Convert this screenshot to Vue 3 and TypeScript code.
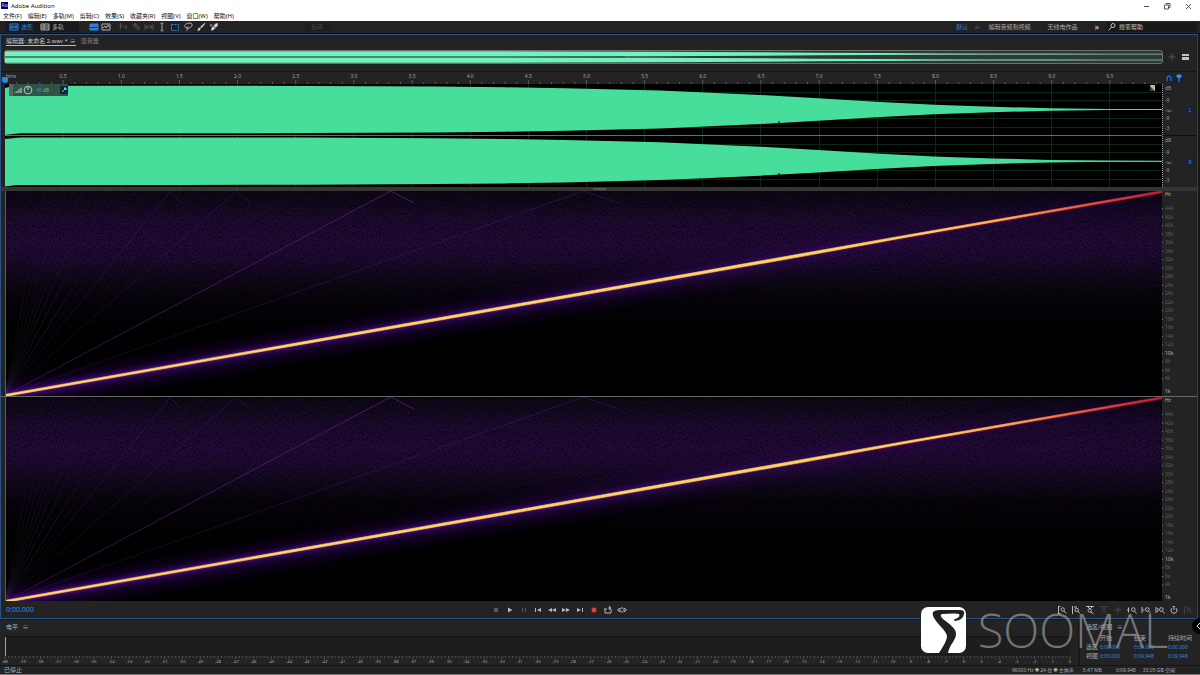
<script setup lang="ts">
interface Icon { name: string; tone?: string }
interface Segment { label: string; values: string[] }

const menus = ['文件(F)', '编辑(E)', '多轨(M)', '剪辑(C)', '效果(S)', '收藏夹(R)', '视图(V)', '窗口(W)', '帮助(H)']

const shapes: Record<string, string> = {
  wave: 'M1 2h8v6h-8zM1 5h8M3 3v4M5 4v2M7 3v4',
  multi: 'M1 2h8v6h-8zM1 4h8M1 6h8M4 2v6',
  spectral: 'M1 2h8v6h-8zM2 6l2-2 1 2 2-3 1 2',
  move: 'M2.5 1v6M1 4h4M6 5h3M7.5 3.5l1.5 1.5-1.5 1.5',
  razor: 'M2 3l2-2 5 5-2 2zM4 3l3 3M3 4l2-2',
  slip: 'M1 2v6M9 2v6M2 5h6M4 3l-2 2 2 2M6 3l2 2-2 2',
  ibeam: 'M3.5 1q1.5 0 1.5 1v6q0 1-1.5 1M6.5 1q-1.5 0-1.5 1M5 8q0 1 1.5 1',
  lasso: 'M3 6c-4-3 1-5 4-5s3 4-1 5c-3 1-4-1-2-1s1 3-1 4',
  spark: 'M5 1v8M1 5h8M3.5 3.5l3 3M6.5 3.5l-3 3',
  loop: 'M2 4v4h6v-4M1 4h3M5 3h3M6 1l2 2-2 2',
  skip: 'M.5 5l2.5-2v4zM4 3h2M4 7h2M9.5 5l-2.5-2v4z',
  zoomInAmp: 'M1.5 1v8M1.5 1.5h2M1.5 8.5h2M4 4.5a1.7 1.7 0 1 0 3.4 0a1.7 1.7 0 1 0-3.4 0M7 6l2.2 2.5',
  zoomOutAmp: 'M1.5 1v8M3 2h3M4 5a1.7 1.7 0 1 0 3.4 0a1.7 1.7 0 1 0-3.4 0M7 6.5l2.2 2',
  zoomTop: 'M1 1.5h8M3 2l2 2 2-2M3 5.5a1.7 1.7 0 1 0 3.4 0a1.7 1.7 0 1 0-3.4 0M6 7l2.5 2',
  zoomIn: 'M1.5 2.5v5M0 5h2.5M4.5 4.5a1.8 1.8 0 1 0 3.6 0a1.8 1.8 0 1 0-3.6 0M7.6 6.2l2 2.3',
  zoomLeft: 'M1 2v6M1.5 5h2M4.5 4.5a1.8 1.8 0 1 0 3.6 0a1.8 1.8 0 1 0-3.6 0M7.6 6.2l2 2.3',
  zoomSel: 'M1 2v6M2 3l1.5 2-1.5 2M4.5 4.5a1.8 1.8 0 1 0 3.6 0a1.8 1.8 0 1 0-3.6 0M7.6 6.2l2 2.3',
  timer: 'M3 3a3 3 0 1 0 4 0M5 1v4M3.5 1.5h2',
  search: 'M4 3.5a2 2 0 1 0 4 0a2 2 0 1 0-4 0M4.5 5l-3 3.5',
}

const tools: Icon[] = [
  { name: 'move', tone: 'dim' }, { name: 'razor', tone: 'dim' }, { name: 'slip', tone: 'dim' }, { name: 'ibeam' },
]

const zooms: Icon[] = [
  { name: 'zoomInAmp' }, { name: 'zoomOutAmp' }, { name: 'zoomTop' }, { name: 'zoomTop', tone: 'dim' },
  { name: 'spark', tone: 'dim' }, { name: 'zoomIn' }, { name: 'zoomLeft' }, { name: 'zoomSel' },
  { name: 'timer' }, { name: 'zoomOutAmp', tone: 'dim' },
]

const duration = 9.948
const pct = (n: number): string => `${n.toFixed(3)}%`
const ticks = Array.from({ length: 99 }, (_, i) => ({ x: pct(((i + 1) / 10 / duration) * 100), major: (i + 1) % 5 === 0 }))
const times = Array.from({ length: 19 }, (_, i) => ({ x: pct(((i + 1) / 2 / duration) * 100), text: ((i + 1) / 2).toFixed(1) }))

// Half amplitude of the swept tone along the clip, as [x, half height] pairs.
const envelope: [number, number][] = [
  [0, 23.7], [175, 23.7], [300, 23.6], [430, 22.9], [500, 22.2], [560, 21.2], [655, 18.9], [700, 17], [755, 14.5],
  [813, 11.2], [871, 7.8], [929, 4.8], [987, 2.7], [1046, 1.3], [1105, 0.6], [1157, 0.4],
]
function wavePath(mid: number, scale: number): string {
  const top = envelope.map(([x, h]) => `${x},${(mid - h * scale).toFixed(2)}`)
  const bottom = [...envelope].reverse().map(([x, h]) => `${x},${(mid + h * scale).toFixed(2)}`)
  return `M${top.join('L')}L${bottom.join('L')}Z`
}

const harmonics = [
  { n: 2, o: 0.4 }, { n: 3, o: 0.85 }, { n: 4, o: 0.12 }, { n: 5, o: 0.35 }, { n: 6, o: 0.12 }, { n: 7, o: 0.35 },
  { n: 8, o: 0.14 }, { n: 9, o: 0.32 }, { n: 11, o: 0.3 }, { n: 13, o: 0.28 }, { n: 15, o: 0.26 }, { n: 17, o: 0.24 },
  { n: 20, o: 0.2 }, { n: 24, o: 0.18 }, { n: 30, o: 0.18 },
]

const freqs = Array.from({ length: 21 }, (_, i) => 44 - i * 2).map((k) => ({
  text: `${k}k`, y: pct((1 - k / 48) * 100), strong: k === 10,
}))

const dbMarks = [
  { y: 4, text: 'dB' }, { y: 16, text: '-9' }, { y: 26, text: '-∞' }, { y: 34, text: '-9' }, { y: 44, text: '-3' },
]

const levelLabels = Array.from({ length: 61 }, (_, i) => ({ x: pct((i / 60) * 100), text: i === 0 ? 'dB' : String(i - 60) }))
const levelTicks = Array.from({ length: 301 }, (_, i) => ({ x: pct(i / 3), long: i % 5 === 0 }))

const segments: Segment[] = [
  { label: '选区', values: ['0:00.000', '0:00.000', '0:00.000'] },
  { label: '视图', values: ['0:00.000', '0:09.948', '0:09.948'] },
]
</script>

<template>
  <div class="app">
    <header class="title">
      <span class="badge">Au</span>
      <h1>Adobe Audition</h1>
      <div class="window-buttons">
        <button aria-label="最小化"><svg viewBox="0 0 8 8"><path d="M2 4.5h5" /></svg></button>
        <button aria-label="还原"><svg viewBox="0 0 8 8"><path d="M1.5 3h4v4h-4zM3 2.5v-1h4v4h-1" /></svg></button>
        <button aria-label="关闭"><svg viewBox="0 0 8 8"><path d="M2 2l5 5M7 2l-5 5" /></svg></button>
      </div>
    </header>
    <nav class="menus"><button v-for="m in menus" :key="m">{{ m }}</button></nav>

    <div class="toolbar">
      <div class="modes">
        <button class="blue on"><svg class="ic" viewBox="0 0 10 10"><path :d="shapes.wave" /></svg>波形</button>
        <button><svg class="ic" viewBox="0 0 10 10"><path :d="shapes.multi" /></svg>多轨</button>
      </div>
      <div class="views">
        <button class="blue on" aria-label="波形显示"><svg class="ic" viewBox="0 0 10 10"><path d="M1 2h8v6h-8z" fill="#2f7fd0" /><path d="M1 5.5h8" stroke="#123a66" /></svg></button>
        <button aria-label="频谱显示"><svg class="ic" viewBox="0 0 10 10"><path :d="shapes.spectral" /></svg></button>
      </div>
      <div class="tools">
        <button v-for="t in tools" :key="t.name" :class="t.tone" :aria-label="t.name"><svg class="ic" viewBox="0 0 10 10"><path :d="shapes[t.name]" /></svg></button>
        <button class="blue on" aria-label="框选"><svg class="ic" viewBox="0 0 10 10"><path d="M1.5 2.5h7v6h-7z" stroke-dasharray="2 1" /></svg></button>
        <button aria-label="套索"><svg class="ic" viewBox="0 0 10 10"><path :d="shapes.lasso" /></svg></button>
        <button aria-label="画笔"><svg class="ic solid" viewBox="0 0 10 10"><path d="M8.5 1l.8.8-4 4.4-1.2-1.2z" /><path d="M3.6 5.4l1.3 1.3q-1 2.3-4 2.3q1.3-.7 1-2q.6-1.5 1.7-1.6z" /></svg></button>
        <button aria-label="污点修复"><svg class="ic solid" viewBox="0 0 10 10"><path d="M2.5 6l4-4.5 2.5-.3-.3 2.5-4.2 4.3-2.5.8z" /><path d="M4.5 4l1.8 1.8" stroke="#444" /><path d="M2 2v2.5M.8 3.2h2.5" stroke="#999" /></svg></button>
      </div>
      <button class="invert" disabled>反转</button>
      <div class="workspaces">
        <button class="blue">默认</button><button class="blue lines" aria-label="工作区菜单">≡</button>
        <button>编辑音频到视频</button>
        <button>无线电作品</button>
        <button class="more" aria-label="更多工作区">»</button>
      </div>
      <label class="search">
        <svg class="ic" viewBox="0 0 10 10"><path :d="shapes.search" /></svg>
        <input type="text" aria-label="搜索帮助" placeholder="搜索帮助" />
      </label>
    </div>

    <main class="editor">
      <div class="tabs">
        <button class="active">编辑器: 未命名 2.wav *<span>≡</span></button>
        <button>混音器</button>
      </div>

      <div class="overview">
        <div class="range">
          <svg viewBox="0 0 1157 12" preserveAspectRatio="none">
            <path d="M0 3.2H1157M0 9H1157" stroke="#86a297" stroke-width="1" />
            <path :d="wavePath(3, 0.12)" fill="#74f1bd" />
            <path :d="wavePath(9, 0.12)" fill="#74f1bd" />
            <path d="M0 6H620" stroke="#1d5a45" stroke-width="1" />
          </svg>
        </div>
        <div class="side">
          <svg class="ic faint" viewBox="0 0 10 10"><path :d="shapes.spark" /></svg>
          <svg class="ic listing" viewBox="0 0 10 10"><path d="M1 2h7v2h-7zM1 5h7v3h-7z" /></svg>
        </div>
      </div>

      <div class="ruler row">
        <div class="plot">
          <svg class="fill">
            <line v-for="t in ticks" :key="t.x" :x1="t.x" :x2="t.x" :y1="t.major ? 8 : 10" y2="12" class="tick" />
            <text x="1" y="6">hms</text>
            <text v-for="t in times" :key="t.x" :x="t.x" y="6" text-anchor="middle">{{ t.text }}</text>
          </svg>
          <span class="playhead"></span>
        </div>
        <div class="snap">
          <button aria-label="对齐"><svg viewBox="0 0 8 8"><path d="M2 7v-3a2 2 0 0 1 4 0v3" /></svg></button>
          <button aria-label="标记"><svg viewBox="0 0 8 8"><path d="M4 4v4M2 1h4v2l-2 1-2-1z" fill="#3b8de0" /></svg></button>
        </div>
      </div>

      <div class="waves row">
        <div class="plot">
          <svg class="fill grid">
            <line v-for="t in times" :key="t.x" :x1="t.x" :x2="t.x" y1="0" y2="103" />
            <line v-for="y in [8, 16, 34, 43, 60, 68, 86, 95]" :key="y" x1="0" x2="100%" :y1="y" :y2="y" />
          </svg>
          <svg class="fill" viewBox="0 0 1157 103" preserveAspectRatio="none">
            <path d="M0 25.5H1157M0 77.5H1157" stroke="#6c9c84" stroke-width="1" />
            <path :d="wavePath(25.5, 1)" fill="#47dd9a" />
            <path :d="wavePath(77.2, 1)" fill="#47dd9a" />
            <path d="M0 0h16L0 4zM0 53V55L16 53.5z" fill="#000" />
            <path d="M0 49h16L0 51zM0 100.5h16L0 102.5z" fill="#47dd9a" />
            <path d="M774 37v4M774 89v4" stroke="#000" stroke-width="1" />
            <path d="M0 51.5H1157" stroke="#68705c" stroke-width="1" />
          </svg>
          <div class="gain">
            <i></i>
            <svg viewBox="0 0 8 8" class="ramp"><path d="M0 7L8 1V7z" /></svg>
            <svg viewBox="0 0 8 8" class="knob"><circle cx="4" cy="4" r="3" /><path d="M4 1v3" /></svg>
            <b>+0</b><span>dB</span>
            <button aria-label="固定"><svg viewBox="0 0 8 8"><path d="M2 6l3-3M4 2h2v2z" /></svg></button>
          </div>
          <span class="corner"></span>
        </div>
        <div class="scale">
          <div v-for="ch in ['L', 'R']" :key="ch" class="db">
            <svg class="fill">
              <line x1="0" x2="0" y1="0" y2="52" class="dots" />
              <text v-for="(d, i) in dbMarks" :key="i" x="3" :y="d.y + 2">{{ d.text }}</text>
            </svg>
            <button>{{ ch }}</button>
          </div>
        </div>
      </div>

      <div class="divider"><i></i></div>

      <div class="spectra">
        <div v-for="ch in ['L', 'R']" :key="ch" class="row spectrum">
          <div class="plot">
            <svg class="fill" viewBox="0 0 1157 205" preserveAspectRatio="none">
              <defs>
                <linearGradient :id="'haze' + ch" x1="0" y1="0" x2="0" y2="1">
                  <stop offset="0" stop-color="#0f0818" /><stop offset=".06" stop-color="#140a22" />
                  <stop offset=".13" stop-color="#200b35" /><stop offset=".25" stop-color="#270c40" />
                  <stop offset=".33" stop-color="#220b38" /><stop offset=".42" stop-color="#140920" />
                  <stop offset=".52" stop-color="#07040c" /><stop offset=".68" stop-color="#000" />
                </linearGradient>
                <linearGradient :id="'sweep' + ch" gradientUnits="userSpaceOnUse" x1="0" y1="0" x2="1157" y2="0">
                  <stop offset="0" stop-color="#ffda68" /><stop offset=".8" stop-color="#ffd35e" />
                  <stop offset=".88" stop-color="#ffa348" /><stop offset=".94" stop-color="#f2503a" />
                  <stop offset="1" stop-color="#cc1830" />
                </linearGradient>
                <linearGradient :id="'glow' + ch" gradientUnits="userSpaceOnUse" x1="0" y1="0" x2="1157" y2="0">
                  <stop offset="0" stop-color="#5c0fae" /><stop offset=".5" stop-color="#500d98" />
                  <stop offset=".8" stop-color="#3a0a66" stop-opacity=".5" /><stop offset="1" stop-color="#30085a" stop-opacity=".15" />
                </linearGradient>
                <linearGradient :id="'rise' + ch" gradientUnits="userSpaceOnUse" x1="0" y1="205" x2="0" y2="0">
                  <stop offset="0" stop-color="#54207a" stop-opacity=".5" /><stop offset=".3" stop-color="#4a1a6c" stop-opacity=".8" />
                  <stop offset="1" stop-color="#561a76" />
                </linearGradient>
                <linearGradient :id="'fan' + ch" gradientUnits="userSpaceOnUse" x1="0" y1="205" x2="0" y2="0">
                  <stop offset="0" stop-color="#54406a" stop-opacity=".6" /><stop offset=".4" stop-color="#4a3060" />
                  <stop offset=".65" stop-color="#4a1a6c" stop-opacity=".35" /><stop offset="1" stop-color="#571a78" stop-opacity=".35" />
                </linearGradient>
                <filter :id="'wide' + ch" filterUnits="userSpaceOnUse" x="0" y="-40" width="1157" height="290"><feGaussianBlur stdDeviation="8" /></filter>
                <filter :id="'tight' + ch" filterUnits="userSpaceOnUse" x="0" y="-40" width="1157" height="290"><feGaussianBlur stdDeviation="2" /></filter>
                <filter :id="'grain' + ch" x="0" y="0" width="1" height="1">
                  <feTurbulence type="fractalNoise" baseFrequency=".8 .5" numOctaves="2" seed="7" />
                  <feColorMatrix values="0 0 0 0 0  0 0 0 0 0  0 0 0 0 0  1.5 0 0 0 -.5" />
                </filter>
              </defs>
              <rect width="1157" height="205" :fill="`url(#haze${ch})`" />
              <rect width="1157" height="205" :filter="`url(#grain${ch})`" />
              <path d="M0 206L1157 2" :stroke="`url(#glow${ch})`" stroke-width="16" opacity=".42" :filter="`url(#wide${ch})`" />
              <g fill="none">
                <path v-for="h in harmonics" :key="h.n" :opacity="h.o" :stroke="`url(#${h.n > 7 ? 'fan' : 'rise'}${ch})`" :d="`M0 205L${1157 / h.n} 0l${70 / h.n} 12`" />
              </g>
              <path d="M0 205L1157 1" :stroke="`url(#glow${ch})`" stroke-width="6" opacity=".75" :filter="`url(#tight${ch})`" />
              <path d="M0 205L1157 1" stroke="#8a1c3a" stroke-width="3.6" opacity=".45" />
              <path d="M0 204L900 44.5L1157 0V1.5L900 46.5L800 65L0 206z" :fill="`url(#sweep${ch})`" :stroke="`url(#sweep${ch})`" stroke-width=".6" />
            </svg>
          </div>
          <div class="scale">
            <svg class="fill hz">
              <g v-for="f in freqs" :key="f.text" :class="{ strong: f.strong }">
                <svg x="0" :y="f.y" overflow="visible"><path d="M0 .5h1" /><text x="3" y="2">{{ f.text }}</text></svg>
              </g>
              <text x="3" y="5" class="lit">Hz</text>
              <svg x="0" y="98%" overflow="visible"><text x="3" y="2" class="lit">1k</text></svg>
            </svg>
          </div>
        </div>
      </div>

      <div class="transport">
        <span class="clock">0:00.000</span>
        <i class="gap-left"></i>
        <div class="icons">
          <button class="dim" aria-label="停止"><svg viewBox="0 0 10 10"><path d="M3 3h4v4h-4z" /></svg></button>
          <button aria-label="播放"><svg viewBox="0 0 10 10"><path d="M3 2.5l4.5 2.5-4.5 2.5z" /></svg></button>
          <button class="dim" aria-label="暂停"><svg viewBox="0 0 10 10"><path d="M3 3h1v4h-1zM6 3h1v4h-1z" /></svg></button>
          <button aria-label="上一个"><svg viewBox="0 0 10 10"><path d="M2 3h1v4h-1zM8 3v4l-4-2z" /></svg></button>
          <button aria-label="快退"><svg viewBox="0 0 10 10"><path d="M5 3v4l-4-2zM9 3v4l-4-2z" /></svg></button>
          <button aria-label="快进"><svg viewBox="0 0 10 10"><path d="M1 3v4l4-2zM5 3v4l4-2z" /></svg></button>
          <button aria-label="下一个"><svg viewBox="0 0 10 10"><path d="M2 3v4l4-2zM7 3h1v4h-1z" /></svg></button>
          <button class="rec" aria-label="录制"><svg viewBox="0 0 10 10"><circle cx="5" cy="5" r="2.5" /></svg></button>
          <button class="stroke" aria-label="循环"><svg viewBox="0 0 10 10"><path :d="shapes.loop" /></svg></button>
          <button class="stroke" aria-label="跳过所选"><svg viewBox="0 0 10 10"><path :d="shapes.skip" /></svg></button>
        </div>
        <i class="gap-right"></i>
        <div class="icons">
          <button v-for="(z, i) in zooms" :key="i" class="stroke" :class="z.tone" :aria-label="z.name"><svg viewBox="0 0 10 10"><path :d="shapes[z.name]" /></svg></button>
        </div>
      </div>
    </main>

    <div class="bottom">
      <section class="levels">
        <h2>电平 <span>≡</span></h2>
        <div class="meter"><i></i></div>
        <svg class="level-scale">
          <line v-for="t in levelTicks" :key="t.x" :x1="t.x" :x2="t.x" y1="0" :y2="t.long ? 3 : 2" />
          <text v-for="l in levelLabels" :key="l.text" :x="l.x" y="7" text-anchor="middle">{{ l.text }}</text>
        </svg>
      </section>
      <section class="selection">
        <h2>选区/视图 <span>≡</span></h2>
        <table>
          <thead><tr><th></th><th>开始</th><th>结束</th><th>持续时间</th></tr></thead>
          <tbody><tr v-for="s in segments" :key="s.label"><th>{{ s.label }}</th><td v-for="(v, i) in s.values" :key="i">{{ v }}</td></tr></tbody>
        </table>
      </section>
    </div>

    <footer class="status">
      <span class="state">已停止</span>
      <span class="format">96000 Hz <em>●</em> 24 位 <em>●</em> 立体声</span><span class="size">5.47 MB</span><span>0:09.948</span><span>33.05 GB 空闲</span>
    </footer>

    <div class="watermark">
      <svg viewBox="0 0 45 46"><rect width="45" height="46" rx="7" fill="#fff" /><path d="M12 5Q14 3 19 3H39Q44 3 43 7Q42 13 34 14Q32 13 34 12Q40 10 38 7Q36 6 21 7Q18 8 22 12C28 17 35 21 35 27C35 33 29 37 27 46H18C21 41 26 34 26 29C25 23 17 18 13 11Q11 7 12 5Z" fill="#202220" /></svg>
      <span>SOOMAL</span>
    </div>
    <button class="drawer" aria-label="展开"><svg viewBox="0 0 8 8"><path d="M6 1L3 4L6 7" /></svg></button>
  </div>
</template>

<style>
body { margin: 0; background: #161616; }
</style>

<style scoped>
.app { position: relative; display: flex; flex-direction: column; height: 100vh; overflow: hidden; box-sizing: border-box; border-bottom: 1px solid #777; background: #181818; color: #acacac; font: 6px/8px "Noto Sans", "Noto Sans CJK SC", sans-serif; }
button { display: flex; align-items: center; padding: 0; border: 0; background: none; color: inherit; font: inherit; white-space: nowrap; }
h1, h2 { margin: 0; font: inherit; }
i, b, em { font-style: normal; font-weight: 400; }
svg { display: block; }
.ic { width: 10px; height: 10px; fill: none; stroke: currentColor; stroke-width: 1; }
.solid { fill: #d0d0d0; stroke: none; }
.listing { fill: #c4c4c4; stroke: none; }
.dim { color: #515151; }
.faint { color: #484848; }
.blue { color: #2d83dc; }

.title { display: flex; align-items: center; gap: 3px; height: 11px; padding-left: 1px; background: #fff; color: #111; }
.badge { width: 7px; height: 7px; background: #00005b; color: #9999ff; font: bold 5px/7px "Liberation Sans", sans-serif; text-align: center; }
.window-buttons { display: flex; gap: 13px; margin-left: auto; padding-right: 8px; }
.window-buttons svg { width: 8px; height: 8px; fill: none; stroke: #555; stroke-width: 1; }
.menus { display: flex; gap: 6px; height: 10px; padding-left: 3px; background: #fff; color: #111; }

.toolbar { display: flex; align-items: center; height: 12px; padding: 0 3px 0 5px; background: #222; border-bottom: 1px solid #0c0f16; }
.modes { display: flex; width: 74px; height: 10px; background: #191919; }
.modes button { gap: 2px; padding: 0 4px; }
.modes .on { background: #141c27; padding-right: 3px; }
.views { display: flex; gap: 2px; padding-left: 10px; }
.tools { display: flex; gap: 3px; padding-left: 7px; }
.invert { margin-left: 84px; padding: 0 8px; background: #1e1e1e; color: #454545; }
.workspaces { display: flex; align-items: center; margin-left: auto; }
.workspaces button { margin-right: 17px; }
.workspaces .blue { margin-right: 6px; }
.workspaces .lines { margin-right: 8px; }
.workspaces .more { margin-right: 7px; color: #ddd; font-size: 9px; }
.search { display: flex; align-items: center; gap: 2px; width: 90px; height: 9px; padding-left: 1px; background: #181818; color: #c0c0c0; }
.search input { width: 70px; min-width: 0; padding: 0; border: 0; outline: 0; background: none; color: inherit; font: inherit; }
.search input::placeholder { color: #c0c0c0; opacity: 1; }

.editor { display: flex; flex: 1; flex-direction: column; min-height: 0; margin-right: 2px; border: 1px solid #2b5283; border-right-color: #23436b; background: #232323; }
.tabs { display: flex; gap: 5px; padding: 1px 5px 0; color: #808080; }
.tabs .active { gap: 2px; height: 10px; border-bottom: 1px solid #bbb; color: #c8c8c8; }
.overview { display: flex; align-items: center; height: 22px; margin-bottom: 3px; padding: 1px 0 2px 3px; box-sizing: border-box; }
.range { flex: 1; margin-right: 4px; border: 1px solid #6a706d; border-radius: 3px; background: #2b3a34; }
.range svg { width: 100%; height: 12px; }
.side { display: flex; gap: 4px; width: 30px; }
.row { display: flex; padding-left: 4px; }
.plot { position: relative; flex: 1; min-width: 0; }
.fill { position: absolute; inset: 0; width: 100%; height: 100%; }
.scale { position: relative; width: 35px; overflow: hidden; }
text { fill: #989898; font-size: 5px; }
.ruler { height: 12px; border-top: 1px solid #151515; }
.ruler text { fill: #a0a0a0; }
.ruler .fill { overflow: visible; }
.tick { stroke: #5c5c5c; }
.playhead { position: absolute; left: -3px; bottom: 1px; width: 6px; height: 6px; border-radius: 1px 1px 3px 3px; background: #2e86de; }
.snap { display: flex; gap: 2px; width: 35px; padding: 1px 0 0 3px; box-sizing: border-box; }
.snap button { width: 8px; height: 9px; background: #12243c; }
.snap svg { width: 8px; height: 8px; fill: none; stroke: #3b8de0; stroke-width: 1; }

.waves { height: 103px; }
.waves .plot { background: #000; }
.grid line { stroke: #0d2615; shape-rendering: crispEdges; }
.gain { position: absolute; left: 4px; top: 0; display: flex; align-items: center; gap: 1px; width: 59px; height: 12px; box-sizing: border-box; background: #2d5444; color: #8da497; font-size: 5px; }
.gain i { width: 4px; height: 12px; background: #59665f; }
.gain svg { width: 8px; height: 8px; }
.gain .knob { width: 10px; height: 10px; fill: none; stroke: #aab8b0; }
.ramp { fill: #82968b; }
.gain b { margin-left: 2px; color: #3b9be0; }
.gain button { margin-left: auto; width: 8px; height: 8px; background: #10273a; }
.gain button svg { fill: #8bbdf0; stroke: #8bbdf0; }
.corner { position: absolute; right: 7px; top: 1px; width: 5px; height: 6px; background: linear-gradient(45deg, #444 40%, #bbb 50%); }
.db { position: relative; height: 51px; border-bottom: 1px solid #101010; }
.db .dots { stroke: #999; stroke-width: 2; stroke-dasharray: 1 1; }
.db button { position: absolute; right: 3px; top: 22px; width: 8px; height: 7px; justify-content: center; background: #14233a; color: #3b8de0; font-size: 5px; }
.divider { display: flex; justify-content: center; align-items: center; height: 4px; background: #353535; }
.divider i { width: 13px; height: 2px; background: #555; }

.spectra { display: flex; flex: 1; flex-direction: column; min-height: 0; }
.spectrum { flex: 1; box-sizing: border-box; border-top: 1px solid #666; }
.spectrum:first-child { border-top: 0; }
.spectrum .plot { overflow: hidden; background: #000; }
.spectrum .plot::before { content: ""; position: absolute; z-index: 1; inset: 0 auto 0 0; width: 1px; background: #6d5450; }
.hz text { fill: #5e5e5e; }
.hz path { stroke: #888; }
.hz .strong text, .hz .lit { fill: #b8b8b8; }

.transport { display: flex; align-items: center; height: 17px; padding: 0 4px 0 5px; }
.clock { color: #2d8ae4; font-size: 7px; }
.gap-left { flex: 17; }
.gap-right { flex: 16; }
.icons { display: flex; gap: 4px; color: #b8b8b8; }
.icons svg { width: 10px; height: 10px; fill: currentColor; }
.icons .stroke svg { fill: none; stroke: currentColor; stroke-width: 1; }
.icons .dim { color: #5a5a5a; }
.icons .rec { color: #e2403c; }
.icons .stroke.dim { color: #3e3e3e; }

.bottom { display: flex; gap: 2px; margin-top: 1px; }
.bottom section { background: #232323; }
.levels { flex: 1; padding: 3px 8px 0 5px; }
.bottom h2 { color: #b4b4b4; padding-left: 1px; }
.levels h2 span, .selection h2 span { margin-left: 3px; }
.meter { height: 19px; margin: 5px 0 0; border-top: 1px solid #151515; background: #1d1d1d; }
.meter i { display: block; width: 1px; height: 19px; background: #b0b030; }
.level-scale { width: 100%; height: 9px; overflow: visible; }
.level-scale line { stroke: #505050; }
.level-scale text { font-size: 4px; fill: #a6a6a6; }
.selection { width: 120px; padding: 3px 8px 0 5px; box-sizing: border-box; }
.selection table { width: 100%; margin-top: 3px; border-spacing: 0; table-layout: fixed; }
.selection th, .selection td { height: 9px; padding: 0 0 0 1px; font-weight: 400; text-align: left; line-height: 9px; white-space: nowrap; }
.selection th:first-child { width: 13px; }
.selection th:nth-child(2), .selection th:nth-child(3) { width: 33px; }
.selection td { color: #2d8ae4; font-size: 5px; }
.status { display: flex; gap: 7px; height: 8px; padding: 0 25px 0 4px; border-top: 1px solid #151515; background: #232323; font-size: 5px; }
.state { margin-right: auto; font-size: 6px; }
.status em { font-size: 4px; }
.status .format { margin-right: 2px; }
.status .size { margin-right: 7px; }

.watermark { position: absolute; right: 32px; bottom: 21px; display: flex; align-items: center; gap: 12px; height: 46px; pointer-events: none; }
.watermark svg { width: 45px; height: 46px; }
.watermark span { color: rgba(150, 150, 150, .72); font: 300 47px/46px "Open Sans", Lato, sans-serif; }
.drawer { position: absolute; right: -8px; bottom: 40px; width: 16px; height: 16px; border-radius: 8px; background: #000; }
.drawer svg { width: 8px; height: 8px; margin-left: 2px; fill: none; stroke: #eee; stroke-width: 1; }
</style>
